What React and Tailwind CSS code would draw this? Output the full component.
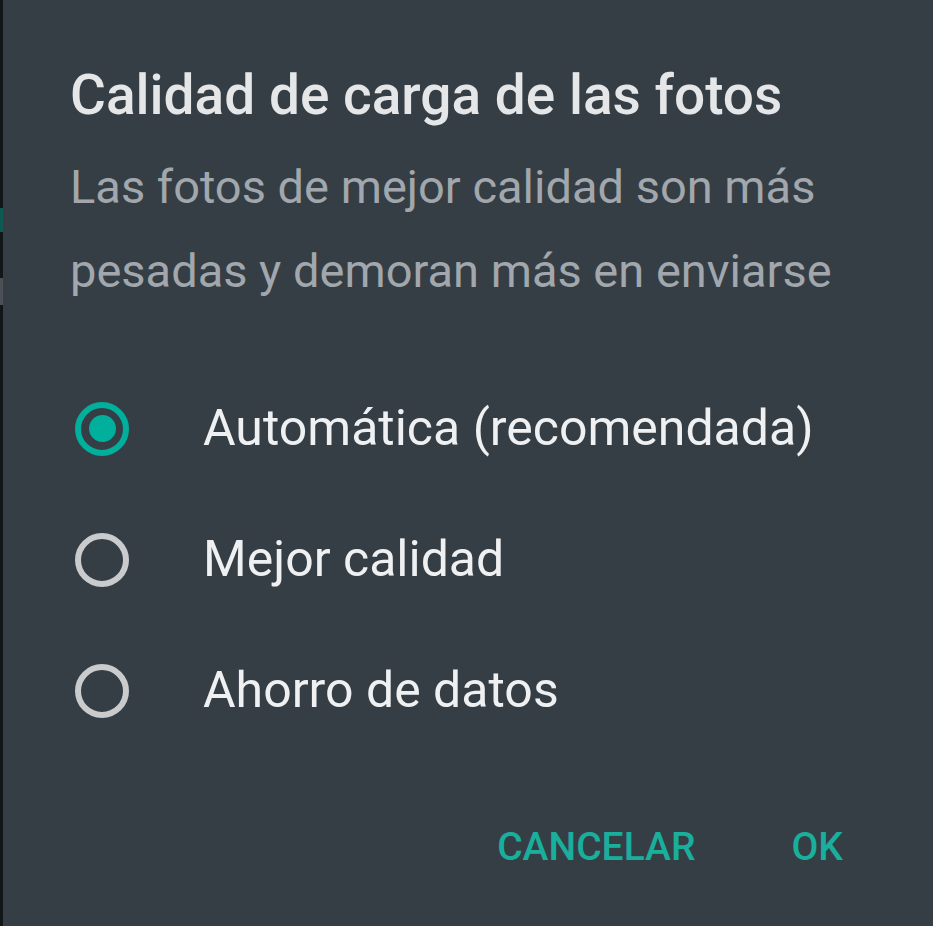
// photo upload quality dialog (dark theme)
import React, { useState } from 'react';

const options = ['Automática (recomendada)', 'Mejor calidad', 'Ahorro de datos'];

const Radio = ({ checked }) => (
    <span
        className={`flex items-center justify-center w-[54px] h-[54px] rounded-full border-[6px] shrink-0 ${
            checked ? 'border-[#00af9c]' : 'border-[#c9cbcd]'
        }`}
    >
        {checked && <span className="w-[27px] h-[27px] rounded-full bg-[#00af9c]" />}
    </span>
);

const App = () => {
    const [selected, setSelected] = useState(0);

    return (
        <div className="flex w-[933px] h-[926px] bg-[#363e45] overflow-hidden" style={{ fontFamily: 'Roboto, "Noto Sans", sans-serif' }}>
            {/* edge of the screen behind the dialog */}
            <div className="flex flex-col w-[3px] shrink-0 bg-[#111619]">
                <div className="h-[208px]" />
                <div className="h-[24px] bg-[#0f5a50]" />
                <div className="h-[46px]" />
                <div className="h-[27px] bg-[#4a5055]" />
            </div>

            <div className="flex flex-col flex-1 pt-[63px] pl-[67px]">
                <h2 className="text-[55px] leading-[64px] font-medium text-[#e4e6e8]">Calidad de carga de las fotos</h2>
                <p className="mt-[18px] text-[47px] leading-[84px] text-[#a1a7ac] pr-[60px]">
                    Las fotos de mejor calidad son más pesadas y demoran más en enviarse
                </p>

                <div className="flex flex-col mt-[50px]">
                    {options.map((label, i) => (
                        <button
                            key={label}
                            onClick={() => setSelected(i)}
                            className="flex items-center h-[131px] pl-[5px] text-left"
                        >
                            <Radio checked={selected === i} />
                            <span className="ml-[74px] text-[50px] text-[#eff0f1]">{label}</span>
                        </button>
                    ))}
                </div>

                <div className="flex justify-end gap-[96px] pr-[90px] mt-[67px]">
                    <button className="text-[39px] leading-[48px] font-medium text-[#1aae9c]">CANCELAR</button>
                    <button className="text-[39px] leading-[48px] font-medium text-[#1aae9c]">OK</button>
                </div>
            </div>
        </div>
    );
};

export default App;
